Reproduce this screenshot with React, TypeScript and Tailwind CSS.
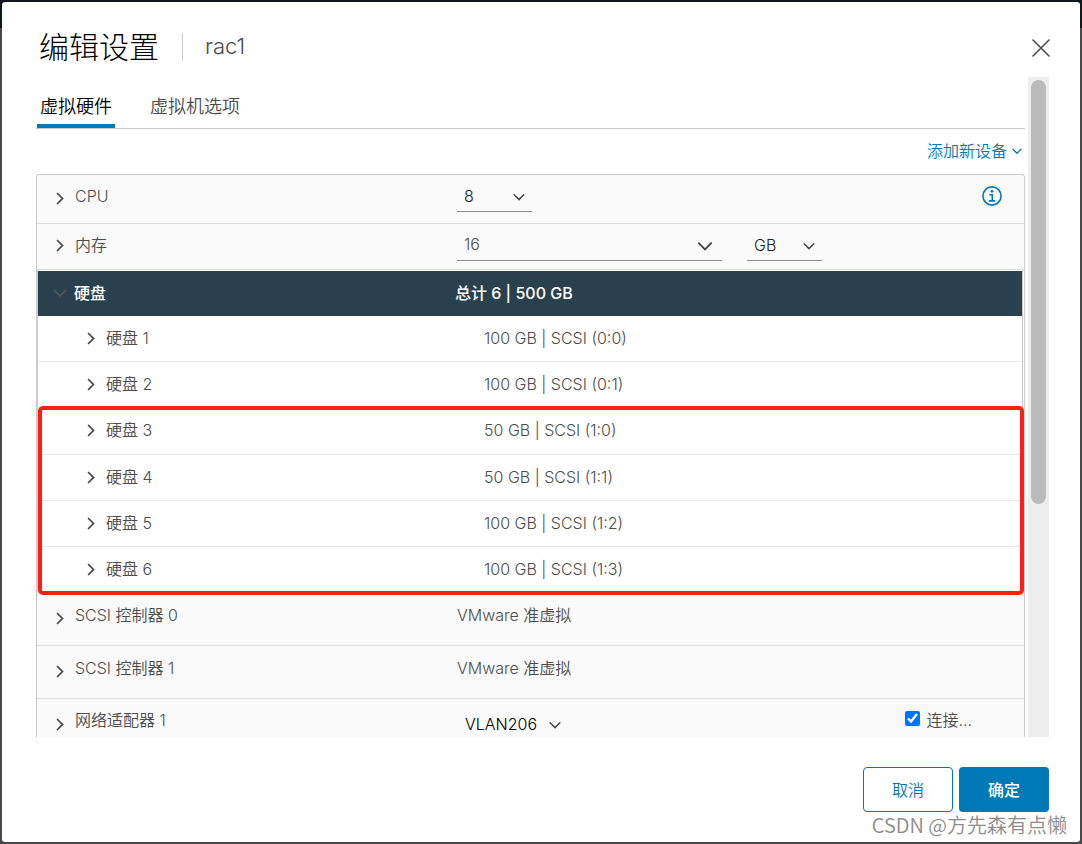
import React, { useState } from 'react';
import clsx from 'clsx';

interface Disk {
  name: string;
  value: string;
}

const DISKS: Disk[] = [
  { name: '硬盘 1', value: '100 GB | SCSI (0:0)' },
  { name: '硬盘 2', value: '100 GB | SCSI (0:1)' },
  { name: '硬盘 3', value: '50 GB | SCSI (1:0)' },
  { name: '硬盘 4', value: '50 GB | SCSI (1:1)' },
  { name: '硬盘 5', value: '100 GB | SCSI (1:2)' },
  { name: '硬盘 6', value: '100 GB | SCSI (1:3)' },
];

const CONTROLLERS = ['SCSI 控制器 0', 'SCSI 控制器 1'];

interface AngleProps {
  direction?: 'right' | 'down';
  className?: string;
}

const Angle: React.FC<AngleProps> = ({ direction = 'down', className }) => (
  <svg viewBox="0 0 16 16" fill="none" stroke="currentColor" aria-hidden="true" className={clsx('shrink-0', className)}>
    <path
      d={direction === 'down' ? 'M2.5 5.5 8 11l5.5-5.5' : 'M5.5 3.5 10.5 8.5 5.5 13.5'}
      strokeWidth="1.7"
      strokeLinecap="round"
    />
  </svg>
);

const ExpandButton: React.FC<{ label: string; expanded?: boolean }> = ({ label, expanded = false }) => (
  <button
    type="button"
    aria-label={label}
    aria-expanded={expanded}
    className={clsx('flex w-4 shrink-0 justify-center', expanded ? 'text-[#565656]' : 'text-[#454545]')}
  >
    <Angle direction={expanded ? 'down' : 'right'} className="size-4" />
  </button>
);

interface SelectProps {
  id: string;
  label?: string;
  options: string[];
}

const UnderlineSelect: React.FC<SelectProps> = ({ id, label, options }) => (
  <div className="relative w-[75px] border-b border-[#8c8c8c] pt-0.5">
    <select id={id} aria-label={label} className="block h-[30px] w-full appearance-none pl-[7px] text-base leading-[30px] text-[#222]">
      {options.map((option) => (
        <option key={option}>{option}</option>
      ))}
    </select>
    <Angle className="pointer-events-none absolute right-1.5 top-[11px] size-3.5 text-[#454545]" />
  </div>
);

const DiskRow: React.FC<Disk> = ({ name, value }) => (
  <div className="grid grid-cols-[446px_1fr] items-center border-b border-[#e8e8e8] pb-px last:border-b-0">
    <div className="flex items-center gap-[7px] pl-[45px]">
      <ExpandButton label={name} />
      <span>{name}</span>
    </div>
    <span>{value}</span>
  </div>
);

export default function App() {
  const [connected, setConnected] = useState(true);

  return (
    <div className="flex h-screen bg-[linear-gradient(#11161c_28px,#48484c_28px)] p-0.5 font-['Inter','Noto_Sans_CJK_SC',sans-serif] text-base font-[350] text-[#4c4c4c]">
      <div role="dialog" aria-labelledby="dialog-title" className="relative flex min-w-0 flex-1 flex-col rounded-[3px] bg-white">
        {/* Header */}
        <header className="flex h-[75px] shrink-0 items-center pl-[37px] pr-[30px] pt-3.5">
          <h1 id="dialog-title" className="text-[30px] font-light leading-10 text-black">编辑设置</h1>
          <div className="ml-[23px] h-7 w-px bg-[#ccc]" />
          <span className="ml-[22px] text-[22px] font-light">rac1</span>
          <button type="button" aria-label="关闭" className="ml-auto pt-0.5 text-[#454545]">
            <svg viewBox="0 0 18 18" fill="none" stroke="currentColor" strokeWidth="1.5" strokeLinecap="round" className="size-[18px]">
              <path d="M1 1l16 16M17 1 1 17" />
            </svg>
          </button>
        </header>

        {/* Scrolling body */}
        <div className="flex min-h-0 flex-1 pl-[34px] pr-[31px]">
          <div className="min-w-0 flex-1 overflow-hidden">
            <div role="tablist" className="flex h-[52px] items-end gap-[32px] border-b border-[#ccc] pl-px text-[18px]">
              <button type="button" role="tab" aria-selected="true" className="border-b-4 border-[#0079b8] px-[3px] pb-1 text-black">
                虚拟硬件
              </button>
              <button type="button" role="tab" aria-selected="false" className="border-b-4 border-transparent px-[3px] pb-1">
                虚拟机选项
              </button>
            </div>

            <div className="flex h-[45px] items-center justify-end pb-px pr-0.5">
              <button type="button" className="flex items-center gap-1 text-[#0079b8]">
                添加新设备
                <Angle className="size-3" />
              </button>
            </div>

            <div className="rounded-[3px] border border-[#ccc] bg-[#fafafa]">
              <div className="grid h-[49px] grid-cols-[420px_1fr] border-b border-[#ddd]">
                <div className="flex items-start gap-[7px] pl-[15px] pt-[9px]">
                  <div className="pt-1.5">
                    <ExpandButton label="CPU" />
                  </div>
                  <label htmlFor="cpu">CPU</label>
                </div>
                <div className="flex items-start justify-between pr-[22px] pt-1">
                  <UnderlineSelect id="cpu" options={['8', '4', '2']} />
                  <button type="button" aria-label="CPU 信息" className="mt-[7px] text-[#0079b8]">
                    <svg viewBox="0 0 20 20" fill="none" stroke="currentColor" className="size-5">
                      <circle cx="10" cy="10" r="9.1" strokeWidth="1.6" />
                      <path d="M7.3 8.7h3v6M6.8 14.9h6.4" strokeWidth="1.6" />
                      <circle cx="10" cy="5.3" r="1.4" fill="currentColor" stroke="none" />
                    </svg>
                  </button>
                </div>
              </div>

              <div className="grid h-[46px] grid-cols-[420px_1fr] border-b border-[#ddd]">
                <div className="flex items-center gap-[7px] pb-[3px] pl-[15px]">
                  <ExpandButton label="内存" />
                  <label htmlFor="memory">内存</label>
                </div>
                <div className="flex items-start gap-[25px] pt-1">
                  <div className="relative w-[265px] border-b border-[#8c8c8c]">
                    <input id="memory" type="text" defaultValue="16" className="block h-8 w-full pl-[7px] outline-none" />
                    <Angle className="pointer-events-none absolute right-2 top-[9px] size-[18px] text-[#454545]" />
                  </div>
                  <UnderlineSelect id="memory-unit" label="内存单位" options={['GB', 'MB']} />
                </div>
              </div>

              {/* Disk group */}
              <div className="mr-px border-x border-[#ccc] bg-white pt-px">
                <div className="grid h-[45px] grid-cols-[417px_1fr] items-center bg-[#29414e] pb-0.5 font-medium text-white">
                  <div className="flex items-center gap-1.5 pl-[14px]">
                    <ExpandButton label="硬盘" expanded />
                    <span>硬盘</span>
                  </div>
                  <span>总计 6 | 500 GB</span>
                </div>
                <div className="relative grid min-h-[277px] auto-rows-fr">
                  {DISKS.map((disk) => (
                    <DiskRow key={disk.name} {...disk} />
                  ))}
                  {/* Highlight around disks 3-6 */}
                  <div className="pointer-events-none absolute -bottom-0.5 -right-0.5 left-0 top-[90px] rounded-[5px] border-4 border-[#ff2013]" />
                </div>
              </div>

              {CONTROLLERS.map((name) => (
                <div key={name} className="grid h-[53px] grid-cols-[420px_1fr] border-b border-[#ddd] pt-2.5">
                  <div className="flex items-start gap-[7px] pl-[15px]">
                    <div className="pt-[7px]">
                      <ExpandButton label={name} />
                    </div>
                    <span>{name}</span>
                  </div>
                  <span>VMware 准虚拟</span>
                </div>
              ))}

              <div className="grid h-[53px] grid-cols-[420px_1fr] pt-[9px]">
                <div className="flex items-start gap-[7px] pl-[15px]">
                  <div className="pt-2">
                    <ExpandButton label="网络适配器 1" />
                  </div>
                  <label htmlFor="network">网络适配器 1</label>
                </div>
                <div className="flex items-start justify-between pl-2 pr-[52px]">
                  <div className="relative mt-1">
                    <select id="network" className="block appearance-none pr-6 text-black">
                      <option>VLAN206</option>
                    </select>
                    <Angle className="pointer-events-none absolute right-0 top-1.5 size-3.5 text-[#454545]" />
                  </div>
                  <div className="flex items-start gap-1.5">
                    <input
                      id="connected"
                      type="checkbox"
                      checked={connected}
                      onChange={(e) => setConnected(e.target.checked)}
                      className="mt-[3px] size-[15px]"
                    />
                    <label htmlFor="connected">连接...</label>
                  </div>
                </div>
              </div>
            </div>
          </div>

          {/* Scrollbar */}
          <div className="ml-[3px] w-[21px] shrink-0 bg-[#eee] px-[3px] pt-[3px]">
            <div className="h-[424px] rounded-full bg-[#bbb]" />
          </div>
        </div>

        {/* Footer */}
        <footer className="flex h-[105px] shrink-0 items-start justify-end gap-1.5 pr-[31px] pt-[30px]">
          <button type="button" className="h-[45px] w-[90px] rounded-[4px] border border-[#0079b8] text-[#0079b8]">取消</button>
          <button type="button" className="h-[45px] w-[90px] rounded-[4px] bg-[#0079b8] font-medium text-white">确定</button>
        </footer>

        {/* Watermark */}
        <div className="pointer-events-none absolute bottom-[3px] right-[13px] font-['Noto_Sans_CJK_SC',sans-serif] text-[20px] leading-7 text-[#8c8c8c]">
          CSDN @方先森有点懒
        </div>
      </div>
    </div>
  );
}
